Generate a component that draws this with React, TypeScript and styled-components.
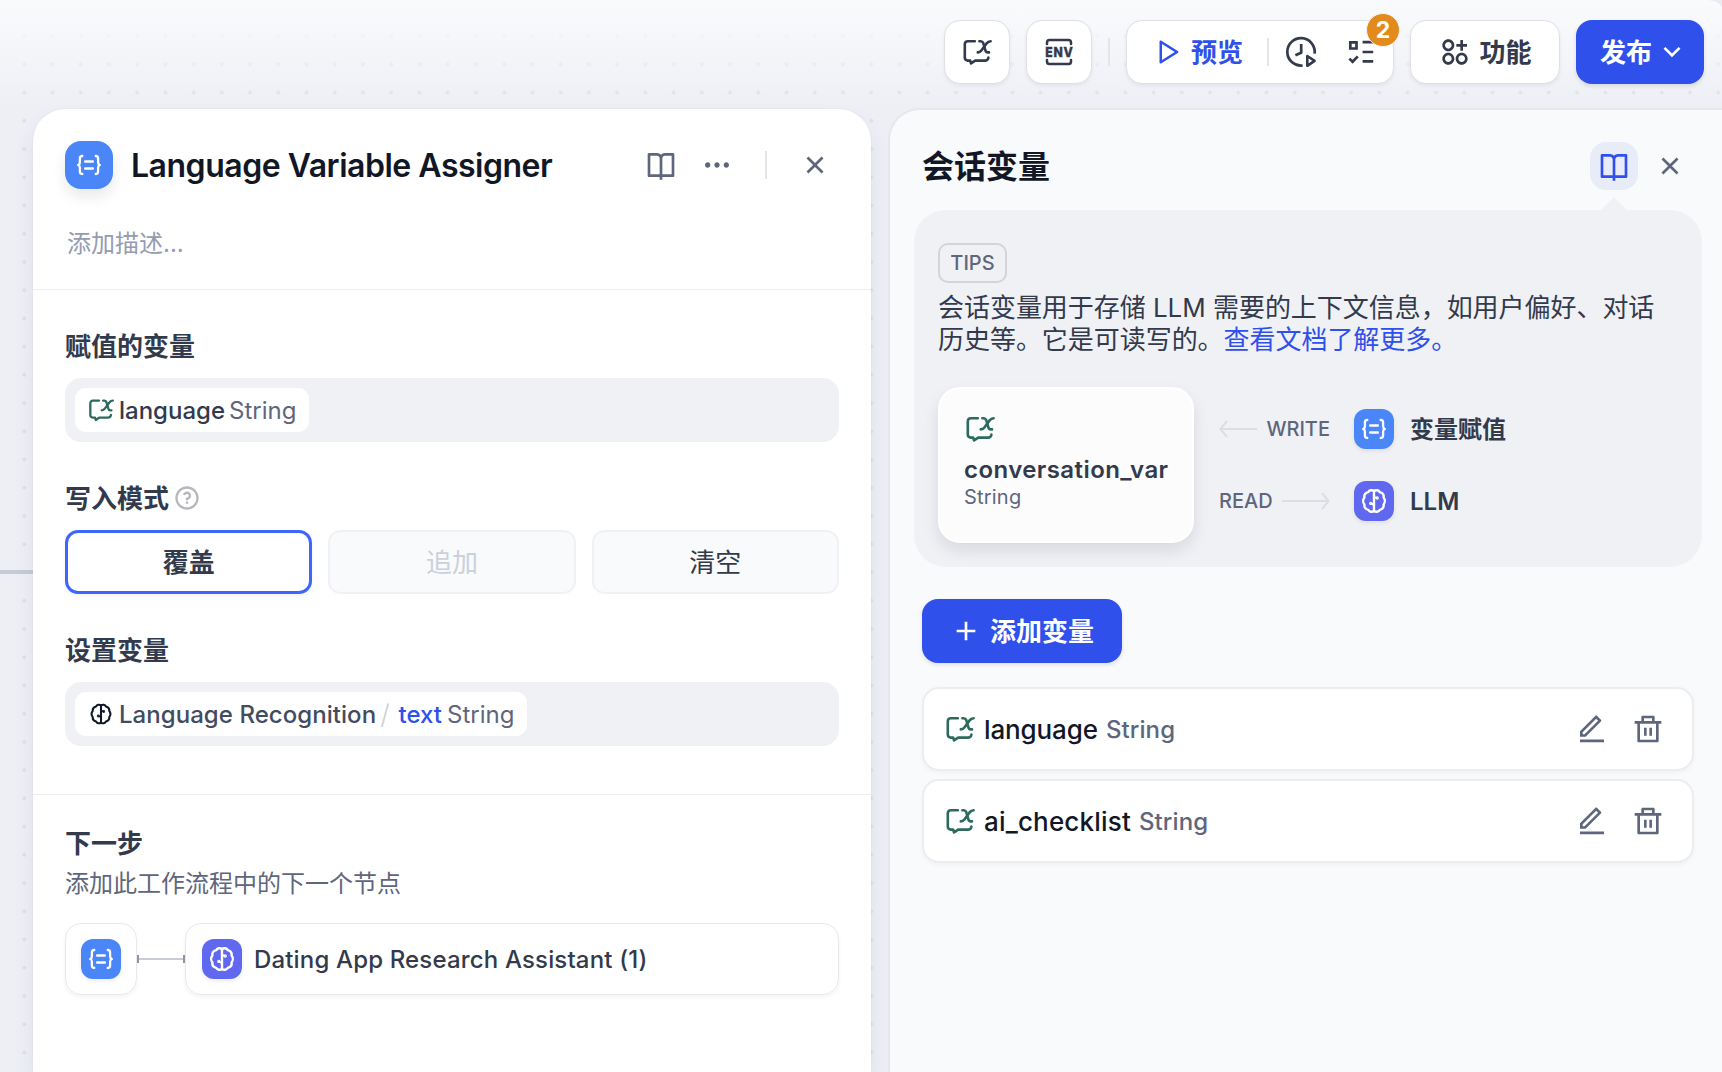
import React from 'react';
import styled, { createGlobalStyle, css } from 'styled-components';
import {
  RiAddLine,
  RiApps2AddLine,
  RiArrowDownSLine,
  RiBookOpenLine,
  RiCloseLine,
  RiDeleteBinLine,
  RiEditLine,
  RiMoreFill,
  RiPlayLargeLine,
  RiQuestionLine,
} from 'react-icons/ri';

const color = {
  ink: '#121726',
  text: '#323a4c',
  muted: '#5e667c',
  faint: '#959bb0',
  disabled: '#cbd0da',
  primary: '#2f50eb',
  green: '#2b6a5c',
  panel: '#f9fafc',
  field: '#f0f1f5',
};

const GlobalStyle = createGlobalStyle`
  * { box-sizing: border-box; }
  body {
    margin: 0;
    overflow: hidden;
    font-family: Inter, "Noto Sans CJK SC", sans-serif;
    color: ${color.text};
    -webkit-font-smoothing: antialiased;
  }
  svg { display: block; flex: none; }
  button { font: inherit; color: inherit; border: 0; padding: 0; background: none; }
`;

/* ---------- icons ---------- */

type IconProps = { size?: number };

const BubbleX = ({ size = 32 }: IconProps) => (
  <svg width={size} height={size} viewBox="0 0 16 16" fill="none" stroke="currentColor" strokeWidth="1.3" strokeLinecap="round" strokeLinejoin="round">
    <path d="M6.9 2.6H3.4C2.5 2.6 1.9 3.2 1.9 4.1V10.8C1.9 11.7 2.5 12.2 3.3 12.3H4.6L5 13.7L7.1 12.3H11.9C12.9 12.3 13.6 11.7 13.7 10.8" />
    <path d="M9.2 2.6H9.8C10.5 2.6 10.9 2.9 11.1 3.5L12.2 7.2C12.4 7.9 12.8 8.2 13.4 8.2H14" />
    <path d="M14.8 2.6C13.9 2.6 13.4 2.9 12.8 3.7L10.3 7.1C9.7 7.9 9.2 8.2 8.4 8.2" />
  </svg>
);

const EnvIcon = () => (
  <svg width="32" height="32" viewBox="0 0 32 32" fill="none" stroke="currentColor" strokeWidth="2.5" strokeLinecap="round">
    <path d="M4 8V6.6C4 5 5 4 6.6 4H25.4C27 4 28 5 28 6.6V8" />
    <path d="M4 24V25.4C4 27 5 28 6.6 28H25.4C27 28 28 27 28 25.4V24" />
    <text x="2.2" y="21" fill="currentColor" strokeWidth="0.4" fontFamily="Inter, sans-serif" fontWeight="800" fontSize="13.8" letterSpacing="0.9" textLength="28.4" lengthAdjust="spacingAndGlyphs">ENV</text>
  </svg>
);

const ClockPlay = () => (
  <svg width="32" height="32" viewBox="0 0 32 32" fill="none" stroke="currentColor" strokeWidth="2.7">
    <path d="M29.6 17.6A13.7 13.7 0 1 0 17.6 29.5" />
    <path d="M16.2 8V16.8L10.4 19.3" strokeLinejoin="round" />
    <path d="M22.3 20V29.8L29.6 24.9Z" strokeLinejoin="round" strokeWidth="2.6" />
  </svg>
);

const Checklist = () => (
  <svg width="32" height="32" viewBox="0 0 32 32" fill="none" stroke="currentColor" strokeWidth="2.7">
    <path d="M5.3 6.3H11.5V12.5H5.3Z" />
    <path d="M17.6 6.2H28.2M17.6 16H28.2M17.6 25.4H28.2" />
    <path d="M4.4 22.6L7.6 25.8L12.8 20.4" />
  </svg>
);

const AssignerIcon = ({ size = 24 }: IconProps) => (
  <svg width={size} height={size} viewBox="0 0 24 24" fill="none" stroke="currentColor" strokeWidth="2.3" strokeLinecap="round" strokeLinejoin="round">
    <path d="M5.3 3C3.6 3 2.9 3.8 2.9 5.4V9.2C2.9 10.8 2.3 11.6 1.2 12C2.3 12.4 2.9 13.2 2.9 14.8V18.6C2.9 20.2 3.6 21 5.3 21" />
    <path d="M18.7 3C20.4 3 21.1 3.8 21.1 5.4V9.2C21.1 10.8 21.7 11.6 22.8 12C21.7 12.4 21.1 13.2 21.1 14.8V18.6C21.1 20.2 20.4 21 18.7 21" />
    <path d="M8.2 8.4H15.8M8.2 15.6H15.8" strokeWidth="2.5" />
  </svg>
);

const BrainIcon = ({ size = 28 }: IconProps) => (
  <svg width={size} height={size} viewBox="0 0 28 28" fill="none" stroke="currentColor" strokeWidth="2.4" strokeLinecap="round" strokeLinejoin="round">
    <path d="M14 4C12 2.6 9.3 3 8.2 5.2C5.6 5.9 4 8 4.4 10.4C2.8 12.4 2.8 15.6 4.4 17.6C4 20 5.6 22.1 8.2 22.8C9.3 25 12 25.4 14 24" />
    <path d="M14 4C16 2.6 18.7 3 19.8 5.2C22.4 5.9 24 8 23.6 10.4C25.2 12.4 25.2 15.6 23.6 17.6C24 20 22.4 22.1 19.8 22.8C18.7 25 16 25.4 14 24" />
    <path d="M14 4V24" />
    <path d="M14 8.5C14.2 10 15.2 10.8 17 11M14 19.4C13.8 17.8 12.8 16.7 11 16.4" strokeWidth="1.8" />
    <circle cx="17.2" cy="11" r="0.5" />
    <circle cx="10.8" cy="16.4" r="0.5" />
  </svg>
);

const Arrow = ({ width, left }: { width: number; left?: boolean }) => (
  <svg width={width} height="20" viewBox={`0 0 ${width} 20`} fill="none" stroke="#dcdee3" strokeWidth="2">
    {left ? <path d={`M8 2L1.4 10L8 18M1.4 10H${width}`} /> : <path d={`M${width - 8} 2L${width - 1.4} 10L${width - 8} 18M0 10H${width - 1.4}`} />}
  </svg>
);

/* ---------- canvas and toolbar ---------- */

const Canvas = styled.div`
  width: 1722px;
  height: 1072px;
  display: flex;
  flex-direction: column;
  overflow: hidden;
  border-top-right-radius: 14px 9px;
  background:
    linear-gradient(180deg, #f9fafc 0, rgba(249, 250, 252, 0.85) 24px, rgba(249, 250, 252, 0) 108px) 0 0 / 100% 108px no-repeat,
    radial-gradient(circle, #dfe0e4 1.6px, transparent 2.3px) 10.1px -6.3px / 28.235px 28.235px,
    #eeeff5;
`;

const Backdrop = styled.div`
  background: #e9ebf0;
`;

const Toolbar = styled.header`
  height: 108px;
  flex: none;
  padding: 20px 18px 0 0;
  display: flex;
  justify-content: flex-end;
  gap: 16px;
`;

const surface = css`
  height: 64px;
  display: flex;
  align-items: center;
  border-radius: 16px;
  background: #fff;
  border: 1px solid #dfe0e4;
  box-shadow: 0 2px 4px rgba(16, 24, 40, 0.06);
`;

const SquareButton = styled.button`
  ${surface}
  width: 66px;
  justify-content: center;
`;

const Separator = styled.span`
  width: 2px;
  height: 28px;
  flex: none;
  background: #e4e5ea;
`;

const ToolbarSeparator = styled(Separator)`
  margin-top: 18px;
`;

const RunGroup = styled.div`
  ${surface}
  width: 268px;
  padding-left: 25px;
`;

const PreviewButton = styled.button`
  display: flex;
  align-items: center;
  gap: 9px;
  width: 115px;
  color: ${color.primary};
  font-size: 26px;
  font-weight: 600;
`;

const ButtonText = styled.span`
  line-height: 36px;
  padding-top: 2px;
`;

const GroupIcon = styled.span<{ $left: number }>`
  position: relative;
  display: flex;
  margin-left: ${(p) => p.$left}px;
`;

const Badge = styled.span`
  position: absolute;
  top: -23px;
  right: -23px;
  width: 34px;
  height: 34px;
  display: grid;
  place-items: center;
  border-radius: 50%;
  border: 1px solid #f4f4f6;
  background: #e38a1c;
  color: #fff;
  font-size: 23px;
  line-height: 1;
  font-weight: 700;
`;

const FeatureButton = styled.button`
  ${surface}
  width: 150px;
  padding-left: 1px;
  justify-content: center;
  gap: 8px;
  font-size: 26px;
  font-weight: 600;
`;

const PrimaryButton = styled.button<{ $width: number; $gap: number; $shift?: number }>`
  width: ${(p) => p.$width}px;
  height: 64px;
  flex: none;
  padding-left: ${(p) => p.$shift ?? 0}px;
  display: flex;
  align-items: center;
  justify-content: center;
  gap: ${(p) => p.$gap}px;
  border-radius: 16px;
  background: ${color.primary};
  box-shadow: 0 2px 4px rgba(16, 24, 40, 0.12);
  color: #fff;
  font-size: 26px;
  font-weight: 600;
`;

/* ---------- panels ---------- */

const Workspace = styled.main`
  flex: 1;
  display: flex;
  gap: 17px;
`;

const Edge = styled.span`
  width: 33px;
  height: 4px;
  margin: 462px -17px 0 0;
  background: #c6cbd7;
`;

const NodePanel = styled.section`
  position: relative;
  width: 838px;
  margin-top: 1px;
  flex: none;
  border-radius: 32px 32px 0 0;
  background: #fff;
  box-shadow: 0 0 1px rgba(16, 24, 40, 0.14), 0 12px 20px rgba(50, 80, 130, 0.09);
`;

const NodeHeader = styled.div`
  height: 181px;
  padding: 32px 32px 0;
  border-bottom: 1px solid #ededf0;
`;

const HeaderRow = styled.div`
  height: 48px;
  display: flex;
  align-items: center;
`;

const Tile = styled.span<{ $size?: number; $violet?: boolean }>`
  width: ${(p) => p.$size ?? 40}px;
  height: ${(p) => p.$size ?? 40}px;
  flex: none;
  display: grid;
  place-items: center;
  border-radius: ${(p) => (p.$size ? 16 : 12)}px;
  background: ${(p) => (p.$violet ? '#6068ef' : '#4a86f7')};
  box-shadow: ${(p) => (p.$size ? '0 8px 14px rgba(16, 24, 40, 0.09)' : '0 2px 4px rgba(16, 24, 40, 0.08)')};
  color: #fff;
`;

const NodeTitle = styled.h1`
  flex: 1;
  margin: 2px 0 0 18px;
  color: ${color.ink};
  font-size: 32px;
  line-height: 40px;
  font-weight: 600;
  letter-spacing: -0.48px;
  white-space: nowrap;
`;

const HeaderActions = styled.div`
  margin-right: 8px;
  display: flex;
  align-items: center;
  color: ${color.muted};
`;

const ActionIcon = styled.span<{ $left: number }>`
  display: flex;
  margin-left: ${(p) => p.$left}px;
`;

const Description = styled.p`
  margin: 37px 0 0 2px;
  color: ${color.faint};
  font-size: 24px;
  line-height: 36px;
`;

const Form = styled.div`
  height: 505px;
  padding: 37px 32px 0;
  display: flex;
  flex-direction: column;
  gap: 38px;
  border-bottom: 1px solid #ededf0;
`;

const Label = styled.div`
  height: 35px;
  margin-bottom: 16px;
  display: flex;
  align-items: center;
  gap: 4px;
  font-size: 26px;
  font-weight: 600;
  svg { color: #b6b7ba; margin-top: 2px; }
`;

const Field = styled.div`
  height: 64px;
  padding: 10px;
  border-radius: 16px;
  background: ${color.field};
  margin-bottom: -1px;
`;

const Chip = styled.div<{ $width: number }>`
  width: ${(p) => p.$width}px;
  height: 44px;
  padding-left: 12px;
  display: flex;
  align-items: center;
  border-radius: 11px;
  background: #fff;
  font-size: 24px;
  white-space: nowrap;
`;

const Word = styled.span<{ $color?: string; $weight?: number; $left?: number; $track?: number; $size?: number }>`
  color: ${(p) => p.$color ?? color.text};
  font-weight: ${(p) => p.$weight ?? 500};
  margin-left: ${(p) => p.$left ?? 0}px;
  letter-spacing: ${(p) => p.$track ?? 0}px;
  font-size: ${(p) => (p.$size ? `${p.$size}px` : 'inherit')};
`;

const IconSlot = styled.span<{ $color: string; $width: number }>`
  display: flex;
  justify-content: center;
  width: ${(p) => p.$width}px;
  color: ${(p) => p.$color};
`;

const Modes = styled.div`
  display: grid;
  grid-template-columns: repeat(3, 1fr);
  gap: 16px;
  margin-bottom: -1px;
`;

const Mode = styled.button<{ $state?: 'selected' | 'disabled' }>`
  height: 64px;
  padding-bottom: 3px;
  border-radius: 13px;
  border: 2px solid #f0f1f5;
  background: #f9fafc;
  font-size: 26px;
  ${(p) =>
    p.$state === 'selected' &&
    css`
      border: 3px solid #3f66fb;
      background: #fff;
      font-weight: 600;
      box-shadow: 0 2px 4px rgba(16, 24, 40, 0.05);
    `}
  ${(p) => p.$state === 'disabled' && css`color: ${color.disabled};`}
`;

const NextStep = styled.div`
  padding: 29px 32px 0;
`;

const NextTitle = styled.div`
  font-size: 26px;
  line-height: 40px;
  font-weight: 600;
`;

const NextHint = styled.div`
  margin: 1px 0 20px;
  color: ${color.muted};
  font-size: 24px;
  line-height: 38px;
`;

const NextFlow = styled.div`
  display: flex;
  align-items: center;
`;

const NodeBox = styled.div<{ $grow?: boolean }>`
  width: 72px;
  height: 72px;
  padding-left: 15px;
  display: flex;
  align-items: center;
  border: 1px solid #e8e9ec;
  border-radius: 16px;
  box-shadow: 0 2px 4px rgba(16, 24, 40, 0.05);
  font-size: 24px;
  ${(p) => p.$grow && css`flex: 1; padding-left: 16px;`}
`;

const Connector = styled.span`
  width: 48px;
  height: 8px;
  display: flex;
  align-items: center;
  border: solid #8d95a8;
  border-width: 0 2px;
  &::before { content: ''; flex: 1; height: 2px; background: #c8ccd6; }
`;

const VariablePanel = styled.section`
  flex: 1;
  padding: 34px 0 0 32px;
  border: 2px solid #e6e7eb;
  border-width: 2px 0 0 2px;
  border-radius: 32px 0 0 0;
  background: ${color.panel};
`;

const PanelHeading = styled.div`
  height: 48px;
  margin-top: -2px;
  padding-right: 36px;
  display: flex;
  align-items: center;
  color: ${color.muted};
`;

const PanelTitle = styled.h2`
  flex: 1;
  margin: 1px 0 0;
  color: ${color.ink};
  font-size: 32px;
  line-height: 40px;
  font-weight: 600;
`;

const DocsButton = styled.button`
  width: 48px;
  height: 48px;
  margin-right: 8px;
  display: grid;
  place-items: center;
  border-radius: 16px;
  background: #e8ebf8;
  color: ${color.primary};
`;

const Tips = styled.div`
  position: relative;
  width: 788px;
  height: 357px;
  margin: 20px 0 32px -8px;
  padding: 33px 24px 0;
  border-radius: 32px;
  background: ${color.field};
  &::before {
    content: '';
    position: absolute;
    top: -9px;
    right: 79px;
    width: 18px;
    height: 18px;
    transform: rotate(45deg);
    background: ${color.field};
  }
`;

const TipsTag = styled.span`
  width: 69px;
  height: 40px;
  display: grid;
  place-items: center;
  border: 2px solid #d2d4d9;
  border-radius: 10px;
  color: ${color.muted};
  font-size: 20px;
  font-weight: 500;
`;

const TipsText = styled.p`
  margin: 9px 0 31px;
  font-size: 26px;
  line-height: 32px;
  letter-spacing: -0.04px;
`;

const DocsLink = styled.a`
  color: ${color.primary};
`;

const Diagram = styled.div`
  display: flex;
  gap: 25px;
`;

const VarCard = styled.div`
  width: 256px;
  height: 156px;
  padding: 24px 24px 0;
  border: 2px solid #fff;
  border-radius: 22px;
  background: #fcfcfd;
  box-shadow: 0 8px 16px rgba(16, 24, 40, 0.1);
  color: ${color.green};
`;

const VarName = styled.div`
  margin-top: 9px;
  color: ${color.text};
  font-size: 24px;
  line-height: 32px;
  font-weight: 600;
  letter-spacing: 0.42px;
`;

const VarType = styled.div`
  margin-top: -1px;
  color: ${color.muted};
  font-size: 20px;
  line-height: 24px;
  letter-spacing: 0.2px;
`;

const Accesses = styled.div`
  padding-top: 22px;
  display: flex;
  flex-direction: column;
  gap: 32px;
`;

const Access = styled.div`
  height: 40px;
  display: flex;
  align-items: center;
  font-size: 24px;
`;

const AccessName = styled.span<{ $lift?: boolean }>`
  margin-left: 16px;
  padding-bottom: ${(p) => (p.$lift ? 4 : 0)}px;
  font-weight: 600;
`;

const Direction = styled.span`
  width: 135px;
  padding-right: 24px;
  display: flex;
  align-items: center;
  justify-content: space-between;
  color: ${color.muted};
  font-size: 20px;
  font-weight: 500;
`;

const Rows = styled.div`
  width: 772px;
  margin-top: 24px;
  display: grid;
  gap: 8px;
`;

const Row = styled.div`
  height: 84px;
  padding: 0 28px 0 20px;
  display: flex;
  align-items: center;
  border: 2px solid #ecedf0;
  border-radius: 17px;
  background: #fff;
  box-shadow: 0 2px 4px rgba(16, 24, 40, 0.04);
  font-size: 26px;
`;

const RowActions = styled.span`
  margin-left: auto;
  display: flex;
  gap: 24px;
  color: ${color.muted};
`;

const variables = [
  { name: 'language', track: -0.12 },
  { name: 'ai_checklist', track: 0.18 },
];

export default function App() {
  return (
    <Backdrop>
      <GlobalStyle />
      <Canvas>
        <Toolbar>
          <SquareButton><BubbleX /></SquareButton>
          <SquareButton><EnvIcon /></SquareButton>
          <ToolbarSeparator />
          <RunGroup>
            <PreviewButton>
              <RiPlayLargeLine size={30} />
              <ButtonText>预览</ButtonText>
            </PreviewButton>
            <Separator />
            <GroupIcon $left={16}><ClockPlay /></GroupIcon>
            <GroupIcon $left={28}>
              <Checklist />
              <Badge>2</Badge>
            </GroupIcon>
          </RunGroup>
          <FeatureButton>
            <RiApps2AddLine size={32} />
            <ButtonText>功能</ButtonText>
          </FeatureButton>
          <PrimaryButton $width={128} $gap={4} $shift={8}>
            <ButtonText>发布</ButtonText>
            <RiArrowDownSLine size={32} />
          </PrimaryButton>
        </Toolbar>

        <Workspace>
          <Edge />
          <NodePanel>
            <NodeHeader>
              <HeaderRow>
                <Tile $size={48}><AssignerIcon /></Tile>
                <NodeTitle>Language Variable Assigner</NodeTitle>
                <HeaderActions>
                  <RiBookOpenLine size={32} />
                  <ActionIcon $left={24}><RiMoreFill size={32} /></ActionIcon>
                  <ActionIcon $left={32}><Separator /></ActionIcon>
                  <ActionIcon $left={32}><RiCloseLine size={32} /></ActionIcon>
                </HeaderActions>
              </HeaderRow>
              <Description>添加描述...</Description>
            </NodeHeader>

            <Form>
              <div>
                <Label>赋值的变量</Label>
                <Field>
                  <Chip $width={234}>
                    <IconSlot $color={color.green} $width={28}><BubbleX size={28} /></IconSlot>
                    <Word $left={4}>language</Word>
                    <Word $left={4} $color={color.muted} $weight={400}>String</Word>
                  </Chip>
                </Field>
              </div>
              <div>
                <Label>写入模式<RiQuestionLine size={28} /></Label>
                <Modes>
                  <Mode $state="selected">覆盖</Mode>
                  <Mode $state="disabled">追加</Mode>
                  <Mode>清空</Mode>
                </Modes>
              </div>
              <div>
                <Label>设置变量</Label>
                <Field>
                  <Chip $width={452}>
                    <IconSlot $color={color.ink} $width={28}><BrainIcon size={24} /></IconSlot>
                    <Word $left={4} $color="#434b5e" $track={0.05}>Language Recognition</Word>
                    <Word $left={4} $color="#cbd0da" $weight={300} $size={27}>/</Word>
                    <Word $left={9} $color={color.primary}>text</Word>
                    <Word $left={5} $color={color.muted} $weight={400}>String</Word>
                  </Chip>
                </Field>
              </div>
            </Form>

            <NextStep>
              <NextTitle>下一步</NextTitle>
              <NextHint>添加此工作流程中的下一个节点</NextHint>
              <NextFlow>
                <NodeBox><Tile><AssignerIcon /></Tile></NodeBox>
                <Connector />
                <NodeBox $grow>
                  <Tile $violet><BrainIcon /></Tile>
                  <Word $left={12} $track={0.16}>Dating App Research Assistant (1)</Word>
                </NodeBox>
              </NextFlow>
            </NextStep>
          </NodePanel>

          <VariablePanel>
            <PanelHeading>
              <PanelTitle>会话变量</PanelTitle>
              <DocsButton><RiBookOpenLine size={32} /></DocsButton>
              <ActionIcon $left={8}><RiCloseLine size={32} /></ActionIcon>
            </PanelHeading>

            <Tips>
              <TipsTag>TIPS</TipsTag>
              <TipsText>
                会话变量用于存储 LLM 需要的上下文信息，如用户偏好、对话历史等。它是可读写的。<DocsLink>查看文档了解更多。</DocsLink>
              </TipsText>
              <Diagram>
                <VarCard>
                  <BubbleX size={32} />
                  <VarName>conversation_var</VarName>
                  <VarType>String</VarType>
                </VarCard>
                <Accesses>
                  <Access>
                    <Direction><Arrow width={38} left />WRITE</Direction>
                    <Tile><AssignerIcon /></Tile>
                    <AccessName $lift>变量赋值</AccessName>
                  </Access>
                  <Access>
                    <Direction>READ<Arrow width={48} /></Direction>
                    <Tile $violet><BrainIcon /></Tile>
                    <AccessName>LLM</AccessName>
                  </Access>
                </Accesses>
              </Diagram>
            </Tips>

            <PrimaryButton $width={200} $gap={8}>
              <RiAddLine size={32} />
              <ButtonText>添加变量</ButtonText>
            </PrimaryButton>

            <Rows>
              {variables.map((v) => (
                <Row key={v.name}>
                  <IconSlot $color={color.green} $width={32}><BubbleX size={32} /></IconSlot>
                  <Word $left={8} $color={color.ink} $track={v.track}>{v.name}</Word>
                  <Word $left={8} $color={color.muted} $size={24} $track={0.1}>String</Word>
                  <RowActions>
                    <RiEditLine size={32} />
                    <RiDeleteBinLine size={32} />
                  </RowActions>
                </Row>
              ))}
            </Rows>
          </VariablePanel>
        </Workspace>
      </Canvas>
    </Backdrop>
  );
}
